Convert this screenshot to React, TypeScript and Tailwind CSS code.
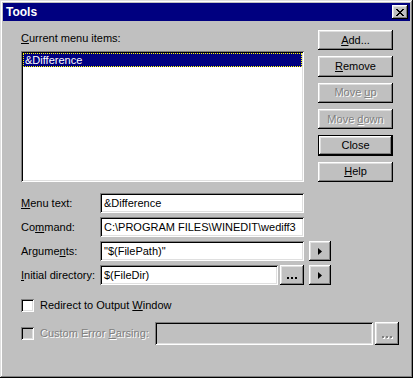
import React from "react"

const font = "font-['Liberation_Sans',Arial,sans-serif] text-[11px] leading-[13px]"
const raised =
  "shadow-[inset_-1px_-1px_#000,inset_1px_1px_#fff,inset_-2px_-2px_#808080,inset_2px_2px_#dfdfdf]"
const sunken =
  "shadow-[inset_1px_1px_#808080,inset_-1px_-1px_#fff,inset_2px_2px_#000,inset_-2px_-2px_#dfdfdf]"
const disabledText = "text-[#808080] [text-shadow:1px_1px_0_#fff]"

// underlined mnemonic letter
function U({ children }: { children: React.ReactNode }) {
  return <span className="underline underline-offset-[1px] decoration-1">{children}</span>
}

interface BtnProps {
  children: React.ReactNode
  disabled?: boolean
  isDefault?: boolean
  className?: string
}

function Btn({ children, disabled, isDefault, className = "" }: BtnProps) {
  return (
    <div
      className={`flex items-center justify-center bg-[#c0c0c0] ${raised} ${
        isDefault ? "border border-black" : ""
      } ${disabled ? disabledText : "text-black"} ${className}`}
    >
      <span className="whitespace-pre flex items-center">{children}</span>
    </div>
  )
}

function Arrow() {
  return (
    <svg width="4" height="7" viewBox="0 0 4 7">
      <path d="M0 0L4 3.5L0 7Z" fill="#000" />
    </svg>
  )
}

function Dots({ disabled }: { disabled?: boolean }) {
  const fill = disabled ? "#808080" : "#000"
  return (
    <svg width="11" height="3" viewBox="0 0 11 3" className="mt-[7px]">
      {disabled && (
        <>
          <rect x="1" y="1" width="2" height="2" fill="#fff" />
          <rect x="5" y="1" width="2" height="2" fill="#fff" />
          <rect x="9" y="1" width="2" height="2" fill="#fff" />
        </>
      )}
      <rect x="0" y="0" width="2" height="2" fill={fill} />
      <rect x="4" y="0" width="2" height="2" fill={fill} />
      <rect x="8" y="0" width="2" height="2" fill={fill} />
    </svg>
  )
}

function Field({ value, className = "" }: { value: string; className?: string }) {
  return (
    <div className={`h-[20px] bg-white ${sunken} flex items-center pl-[4px] overflow-hidden whitespace-nowrap ${className}`}>
      {value}
    </div>
  )
}

function CheckBox({ disabled }: { disabled?: boolean }) {
  return <div className={`w-[13px] h-[13px] shrink-0 ${disabled ? "bg-[#c0c0c0]" : "bg-white"} ${sunken}`} />
}

export default function App() {
  const rows: { label: React.ReactNode; value: string; extra?: "arrow" | "both" }[] = [
    { label: <><U>M</U>enu text:</>, value: "&Difference" },
    { label: <>Co<U>m</U>mand:</>, value: "C:\\PROGRAM FILES\\WINEDIT\\wediff3" },
    { label: <>Argume<U>n</U>ts:</>, value: "\"$(FilePath)\"", extra: "arrow" },
    { label: <><U>I</U>nitial directory:</>, value: "$(FileDir)", extra: "both" },
  ]

  return (
    <div className={`w-[413px] h-[378px] bg-[#c0c0c0] p-[3px] flex flex-col text-black ${font} shadow-[inset_-1px_-1px_#000,inset_1px_1px_#dfdfdf,inset_-2px_-2px_#808080,inset_2px_2px_#fff]`}>
      {/* Title bar */}
      <div className="h-[18px] bg-[#000080] flex items-center justify-between pl-[3px] pr-[2px]">
        <span className="text-white font-bold text-[12px]">Tools</span>
        <div className={`w-[16px] h-[14px] bg-[#c0c0c0] ${raised} flex items-center justify-center`}>
          <svg width="8" height="7" viewBox="0 0 8 7" shapeRendering="crispEdges">
            <path d="M0 0h2v1h1v1h2v-1h1v-1h2v1h-1v1h-1v1h-1v1h1v1h1v1h1v1h-2v-1h-1v-1h-2v1h-1v1h-2v-1h1v-1h1v-1h1v-1h-1v-1h-1v-1h-1z" fill="#000" />
          </svg>
        </div>
      </div>

      {/* Top: list and buttons */}
      <div className="h-[161px] flex pl-[18px]">
        <div className="w-[283px] pt-[11px] flex flex-col">
          <div className="h-[13px]"><U>C</U>urrent menu items:</div>
          <div className={`mt-[6px] h-[131px] bg-white ${sunken} p-[2px]`}>
            <div className="h-[14px] bg-[#000080] text-white border border-dotted border-[#ffff00] flex items-center pl-[1px]">
              &amp;Difference
            </div>
          </div>
        </div>
        <div className="ml-[14px] pt-[9px] flex flex-col gap-[6px] w-[75px]">
          <Btn className="h-[23px]"><U>A</U>dd...</Btn>
          <Btn className="h-[23px]"><U>R</U>emove</Btn>
          <Btn className="h-[23px]" disabled>{"Move "}<U>u</U>p</Btn>
          <Btn className="h-[23px]" disabled>{"Move "}<U>d</U>own</Btn>
          <Btn className="h-[23px]" isDefault>Close</Btn>
          <Btn className="h-[23px]"><U>H</U>elp</Btn>
        </div>
      </div>

      {/* Form rows */}
      <div className="pt-[11px] pl-[18px] flex flex-col gap-[4px]">
        {rows.map((r, i) => (
          <div key={i} className="h-[20px] flex items-center">
            <div className="w-[79px] shrink-0">{r.label}</div>
            <Field value={r.value} className={r.extra === "both" ? "w-[178px]" : "w-[204px]"} />
            {r.extra === "both" && (
              <Btn className="h-[20px] w-[24px] ml-[2px]"><Dots /></Btn>
            )}
            {r.extra && <Btn className="h-[20px] w-[22px] ml-[5px]"><Arrow /></Btn>}
          </div>
        ))}
      </div>

      {/* Checkboxes */}
      <div className="mt-[14px] pl-[18px] h-[13px] flex items-center gap-[6px]">
        <CheckBox />
        <span>Redirect to Output <U>W</U>indow</span>
      </div>
      <div className="mt-[10px] pl-[18px] h-[23px] flex items-center">
        <CheckBox disabled />
        <span className={`ml-[6px] w-[115px] ${disabledText}`}>Custom Error <U>P</U>arsing:</span>
        <div className={`h-[23px] w-[218px] bg-[#c0c0c0] ${sunken}`} />
        <Btn className="h-[23px] w-[24px] ml-[2px]"><Dots disabled /></Btn>
      </div>
    </div>
  )
}
